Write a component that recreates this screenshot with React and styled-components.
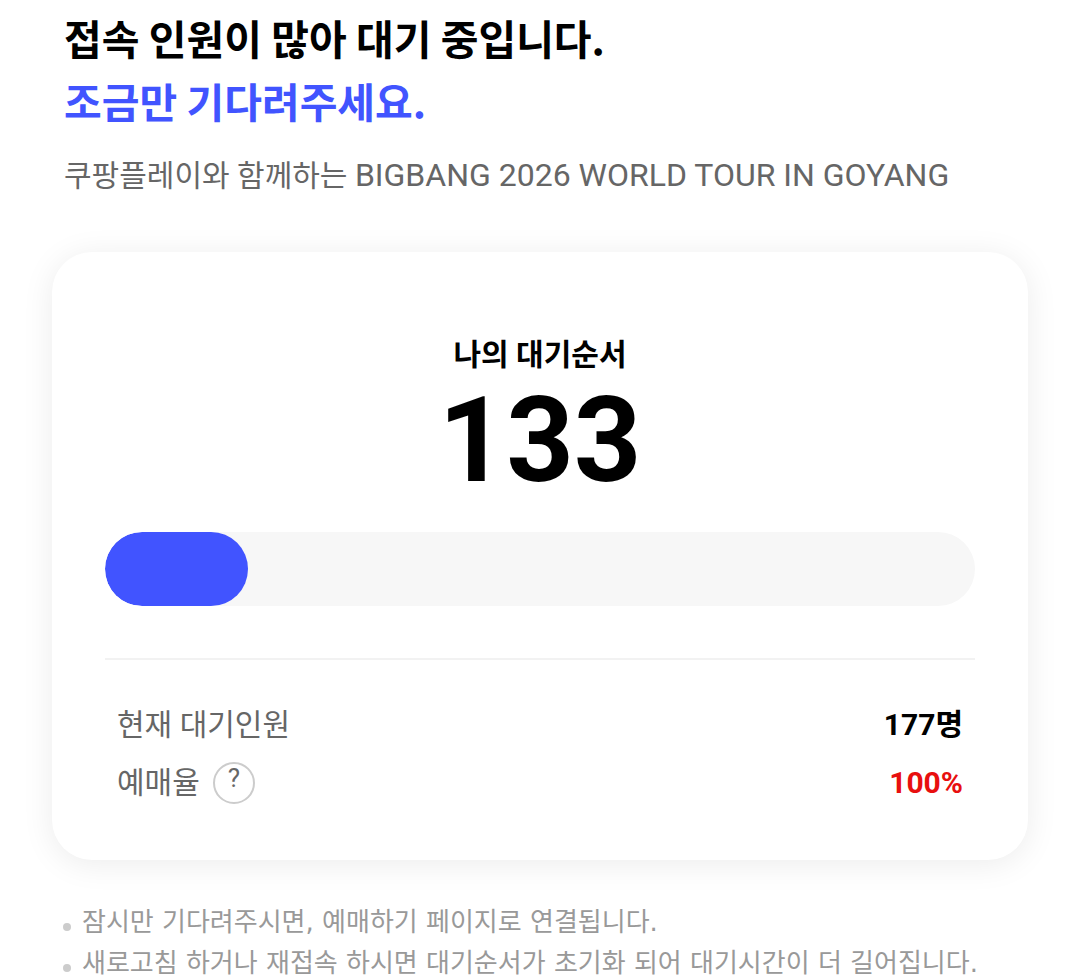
import React from 'react';
import styled, { createGlobalStyle } from 'styled-components';

const GlobalStyle = createGlobalStyle`
  * { box-sizing: border-box; }
  body {
    margin: 0;
    background: #fff;
    color: #000;
    font-family: Roboto, "Noto Sans CJK KR", sans-serif;
    word-break: keep-all;
  }
`;

const Page = styled.main`
  padding: 6px 52px 0;
`;

const Header = styled.header`
  padding: 0 12px;
`;

const Title = styled.h1`
  margin: 0;
  font-family: "Noto Sans CJK KR", sans-serif;
  font-size: 41px;
  line-height: 63px;
  font-weight: 700;
`;

const Accent = styled.span`
  display: block;
  color: #4154ff;
`;

const EventName = styled.p`
  margin: 19px 0 0;
  font-size: 30px;
  line-height: 48px;
  color: #666;
`;

const TourName = styled.span`
  font-size: 32px;
`;

const Card = styled.section`
  margin-top: 52px;
  padding: 81px 53px 48px;
  border-radius: 40px;
  background: #fff;
  box-shadow: 0 4px 32px rgba(0, 0, 0, 0.08);
`;

const CardTitle = styled.h2`
  margin: 0;
  text-align: center;
  font-size: 30px;
  line-height: 44px;
  font-weight: 700;
`;

const Position = styled.p`
  margin: 0;
  text-align: center;
  font-size: 118px;
  line-height: 128px;
  font-weight: 700;
`;

const Track = styled.div`
  height: 74px;
  margin-top: 27px;
  border-radius: 37px;
  background: #f7f7f7;
  overflow: hidden;
`;

const Fill = styled.div`
  height: 100%;
  border-radius: 37px;
  background: #4154ff;
`;

const Stats = styled.dl`
  margin: 52px 0 0;
  padding: 36px 12px 0;
  border-top: 2px solid #f2f2f2;
`;

const StatRow = styled.div`
  display: flex;
  align-items: center;
  justify-content: space-between;
  height: 58px;
`;

const StatLabel = styled.dt`
  display: flex;
  align-items: center;
  gap: 13px;
  font-size: 30px;
  line-height: 44px;
  color: #666;
`;

const StatValue = styled.dd`
  margin: 0;
  font-size: 30px;
  line-height: 44px;
  font-weight: 700;
  color: ${({ $alert }) => ($alert ? '#e80f0f' : '#000')};
`;

const HelpButton = styled.button`
  width: 42px;
  height: 42px;
  padding: 0 0 10px;
  border: 2px solid #ccc;
  border-radius: 50%;
  background: #fff;
  color: #666;
  font: 400 26px/28px Roboto, sans-serif;
`;

const Notes = styled.ul`
  margin: 42px 0 0;
  padding: 0 11px;
  list-style: none;
`;

const Note = styled.li`
  display: flex;
  align-items: center;
  gap: 11px;
  font-family: "DejaVu Sans", "Noto Sans CJK KR", sans-serif;
  font-size: 26px;
  line-height: 41px;
  color: #999;

  &::before {
    content: "";
    flex: none;
    width: 8px;
    height: 8px;
    margin-top: 8px;
    border-radius: 50%;
    background: #ccc;
  }
`;

const progress = 16.4;

export default function App() {
  return (
    <Page>
      <GlobalStyle />
      <Header>
        <Title>
          접속 인원이 많아 대기 중입니다.
          <Accent>조금만 기다려주세요.</Accent>
        </Title>
        <EventName>
          쿠팡플레이와 함께하는 <TourName>BIGBANG 2026 WORLD TOUR IN GOYANG</TourName>
        </EventName>
      </Header>
      <Card>
        <CardTitle>나의 대기순서</CardTitle>
        <Position>133</Position>
        <Track role="progressbar" aria-label="나의 대기순서" aria-valuenow={progress}>
          <Fill style={{ width: `${progress}%` }} />
        </Track>
        <Stats>
          <StatRow>
            <StatLabel>현재 대기인원</StatLabel>
            <StatValue>177명</StatValue>
          </StatRow>
          <StatRow>
            <StatLabel>
              예매율
              <HelpButton type="button">?</HelpButton>
            </StatLabel>
            <StatValue $alert>100%</StatValue>
          </StatRow>
        </Stats>
      </Card>
      <Notes>
        <Note>잠시만 기다려주시면, 예매하기 페이지로 연결됩니다.</Note>
        <Note>새로고침 하거나 재접속 하시면 대기순서가 초기화 되어 대기시간이 더 길어집니다.</Note>
      </Notes>
    </Page>
  );
}
